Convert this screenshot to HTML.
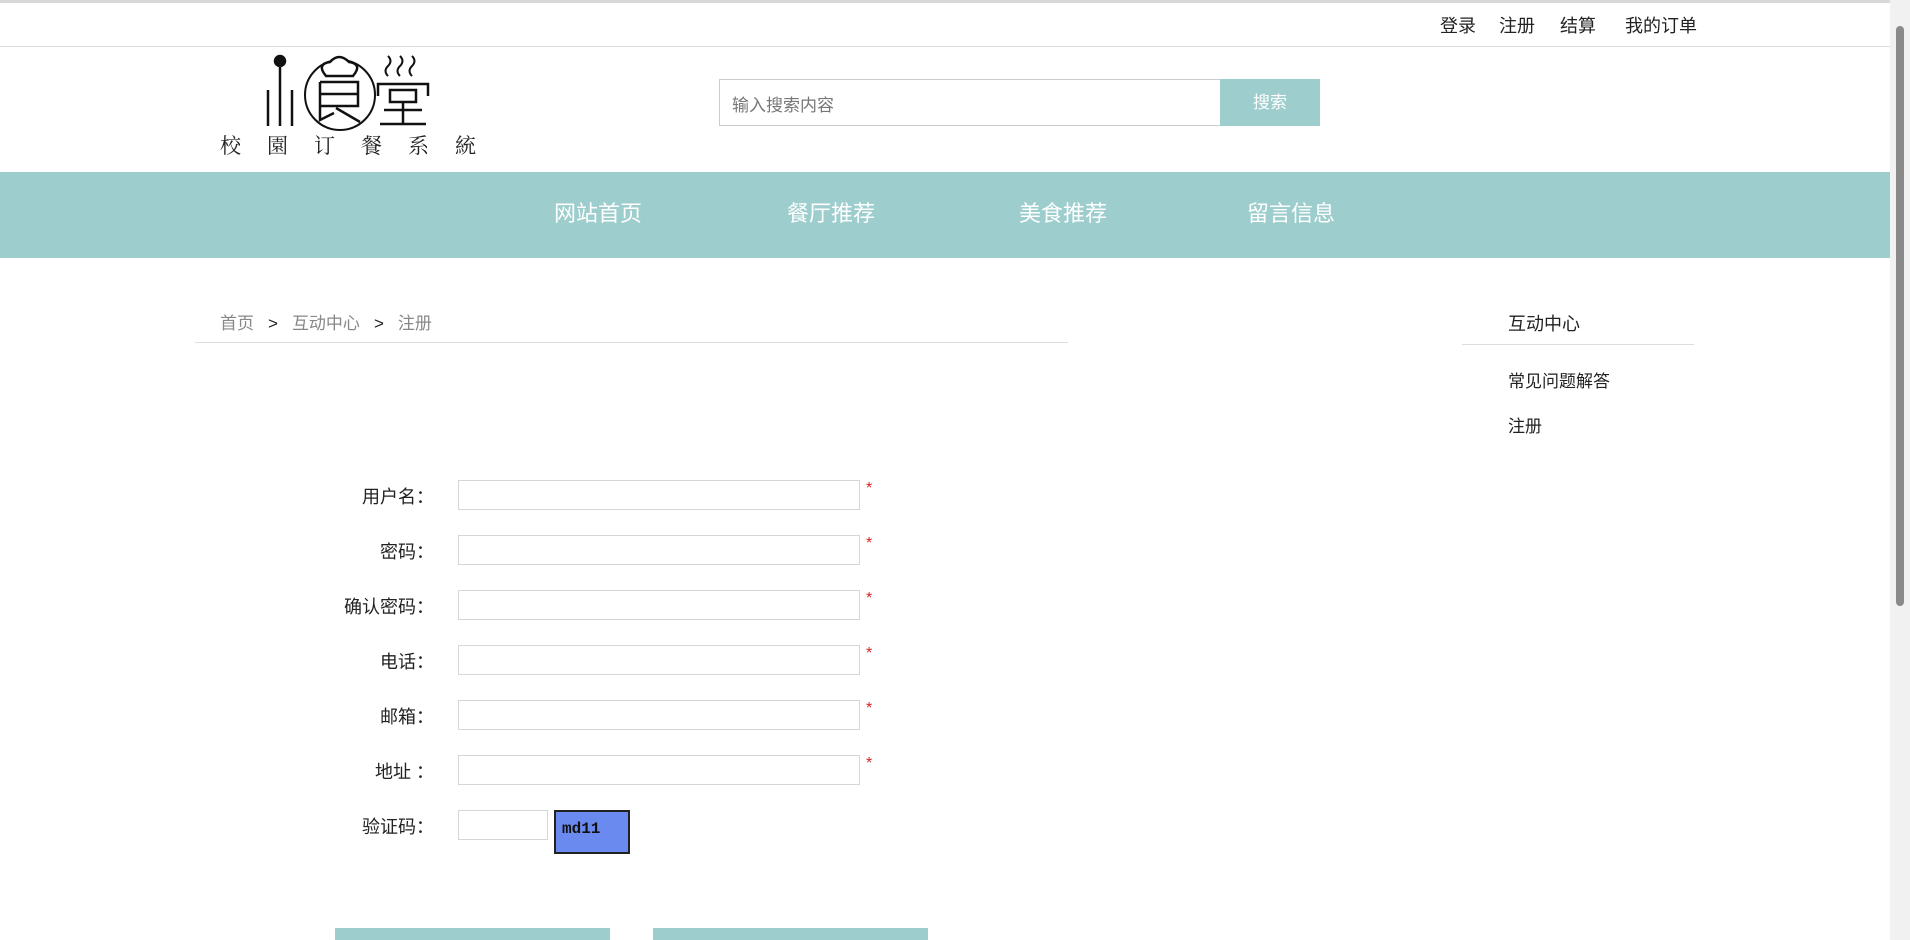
<!DOCTYPE html>
<html><head><meta charset="utf-8"><style>
*{margin:0;padding:0;box-sizing:border-box}
body{width:1910px;height:940px;overflow:hidden;background:#fff;font-family:"Liberation Sans","Noto Sans CJK SC",sans-serif;color:#222;position:relative}
.a{position:absolute;white-space:nowrap}
.inp{position:absolute;border:1px solid #d6d6d6;background:#fff}
.lbl{position:absolute;right:1476px;font-size:18px;color:#222}
.star{position:absolute;left:866px;color:#d22;font-size:16px}
.bc span{margin:0 14px}
</style></head><body>
<div class="a" style="left:0;top:0;width:1910px;height:3px;background:#d8d8d8"></div>
<div class="a" style="left:1890px;top:0;width:20px;height:940px;background:#f1f1f1"></div>
<div class="a" style="left:1896px;top:26px;width:8px;height:580px;background:#8a8a8a;border-radius:4px"></div>
<div class="a" style="top:12px;left:1440px;font-size:18px">登录</div>
<div class="a" style="top:12px;left:1499px;font-size:18px">注册</div>
<div class="a" style="top:12px;left:1560px;font-size:18px">结算</div>
<div class="a" style="top:12px;left:1625px;font-size:18px">我的订单</div>
<div class="a" style="left:0;top:46px;width:1890px;height:1px;background:#ddd"></div>
<svg class="a" style="left:218px;top:52px" width="260" height="108" viewBox="0 0 260 108">
<g stroke="#111" stroke-width="2.5" fill="none">
<circle cx="62" cy="9" r="5" fill="#111"/>
<line x1="62" y1="12" x2="62" y2="74"/><line x1="50" y1="38" x2="50" y2="74"/><line x1="74" y1="38" x2="74" y2="74"/>
<circle cx="122" cy="43" r="35" stroke-width="2"/>
<path d="M108 24 q-10 -12 4 -14 q9 -10 19 0 q14 2 4 14 z" fill="#fff"/>
<path d="M102 30 h38 v24 h-38 M102 42 h38 M102 30 v38 l14 -7 M118 56 l24 14"/>
<path d="M170 4 q5 5 0 10 q-5 5 0 10 M182 4 q5 5 0 10 q-5 5 0 10 M194 4 q5 5 0 10 q-5 5 0 10" stroke-width="2"/>
<path d="M160 44 v-12 h50 v12 M172 38 h26 v12 h-26 z M166 58 h38 M185 50 v22 M162 72 h46"/>
</g>
<text x="2" y="101" font-family="Liberation Serif,'Noto Serif CJK SC',serif" font-size="21" fill="#222" letter-spacing="26">校園订餐系統</text>
</svg>
<div class="inp" style="left:719px;top:79px;width:502px;height:47px;border-color:#ccc"></div>
<div class="a" style="left:732px;top:91px;font-size:17px;color:#777">输入搜索内容</div>
<div class="a" style="left:1220px;top:79px;width:100px;height:47px;background:#9dcdcd;color:#fff;font-size:17px;text-align:center;line-height:47px">搜索</div>
<div class="a" style="left:0;top:172px;width:1890px;height:86px;background:#9dcdcd"></div>
<div class="a" style="left:554px;top:196px;font-size:22px;color:#fff">网站首页</div>
<div class="a" style="left:787px;top:196px;font-size:22px;color:#fff">餐厅推荐</div>
<div class="a" style="left:1019px;top:196px;font-size:22px;color:#fff">美食推荐</div>
<div class="a" style="left:1247px;top:196px;font-size:22px;color:#fff">留言信息</div>
<div class="a bc" style="left:220px;top:309px;font-size:17px;color:#888">首页<span style="color:#222">&gt;</span>互动中心<span style="color:#222">&gt;</span>注册</div>
<div class="a" style="left:195px;top:342px;width:873px;height:1px;background:#ddd"></div>
<div class="a" style="left:1508px;top:310px;font-size:18px">互动中心</div>
<div class="a" style="left:1462px;top:344px;width:232px;height:1px;background:#ddd"></div>
<div class="a" style="left:1508px;top:367px;font-size:17px">常见问题解答</div>
<div class="a" style="left:1508px;top:412px;font-size:17px">注册</div>

<div class="lbl" style="top:483px">用户名：</div><div class="inp" style="left:458px;top:480px;width:402px;height:30px"></div><div class="star" style="top:480px">*</div>
<div class="lbl" style="top:538px">密码：</div><div class="inp" style="left:458px;top:535px;width:402px;height:30px"></div><div class="star" style="top:535px">*</div>
<div class="lbl" style="top:593px">确认密码：</div><div class="inp" style="left:458px;top:590px;width:402px;height:30px"></div><div class="star" style="top:590px">*</div>
<div class="lbl" style="top:648px">电话：</div><div class="inp" style="left:458px;top:645px;width:402px;height:30px"></div><div class="star" style="top:645px">*</div>
<div class="lbl" style="top:703px">邮箱：</div><div class="inp" style="left:458px;top:700px;width:402px;height:30px"></div><div class="star" style="top:700px">*</div>
<div class="lbl" style="top:758px">地址 ：</div><div class="inp" style="left:458px;top:755px;width:402px;height:30px"></div><div class="star" style="top:755px">*</div>
<div class="lbl" style="top:813px">验证码：</div><div class="inp" style="left:458px;top:810px;width:90px;height:30px"></div>
<div class="a" style="left:554px;top:810px;width:76px;height:44px;background:#6a8af0;border:2px solid #222;font-family:'Liberation Mono',monospace;font-weight:bold;font-size:16px;padding:8px 0 0 6px;color:#111">md11</div>
<div class="a" style="left:335px;top:928px;width:275px;height:12px;background:#9dcdcd"></div>
<div class="a" style="left:653px;top:928px;width:275px;height:12px;background:#9dcdcd"></div>
</body></html>
